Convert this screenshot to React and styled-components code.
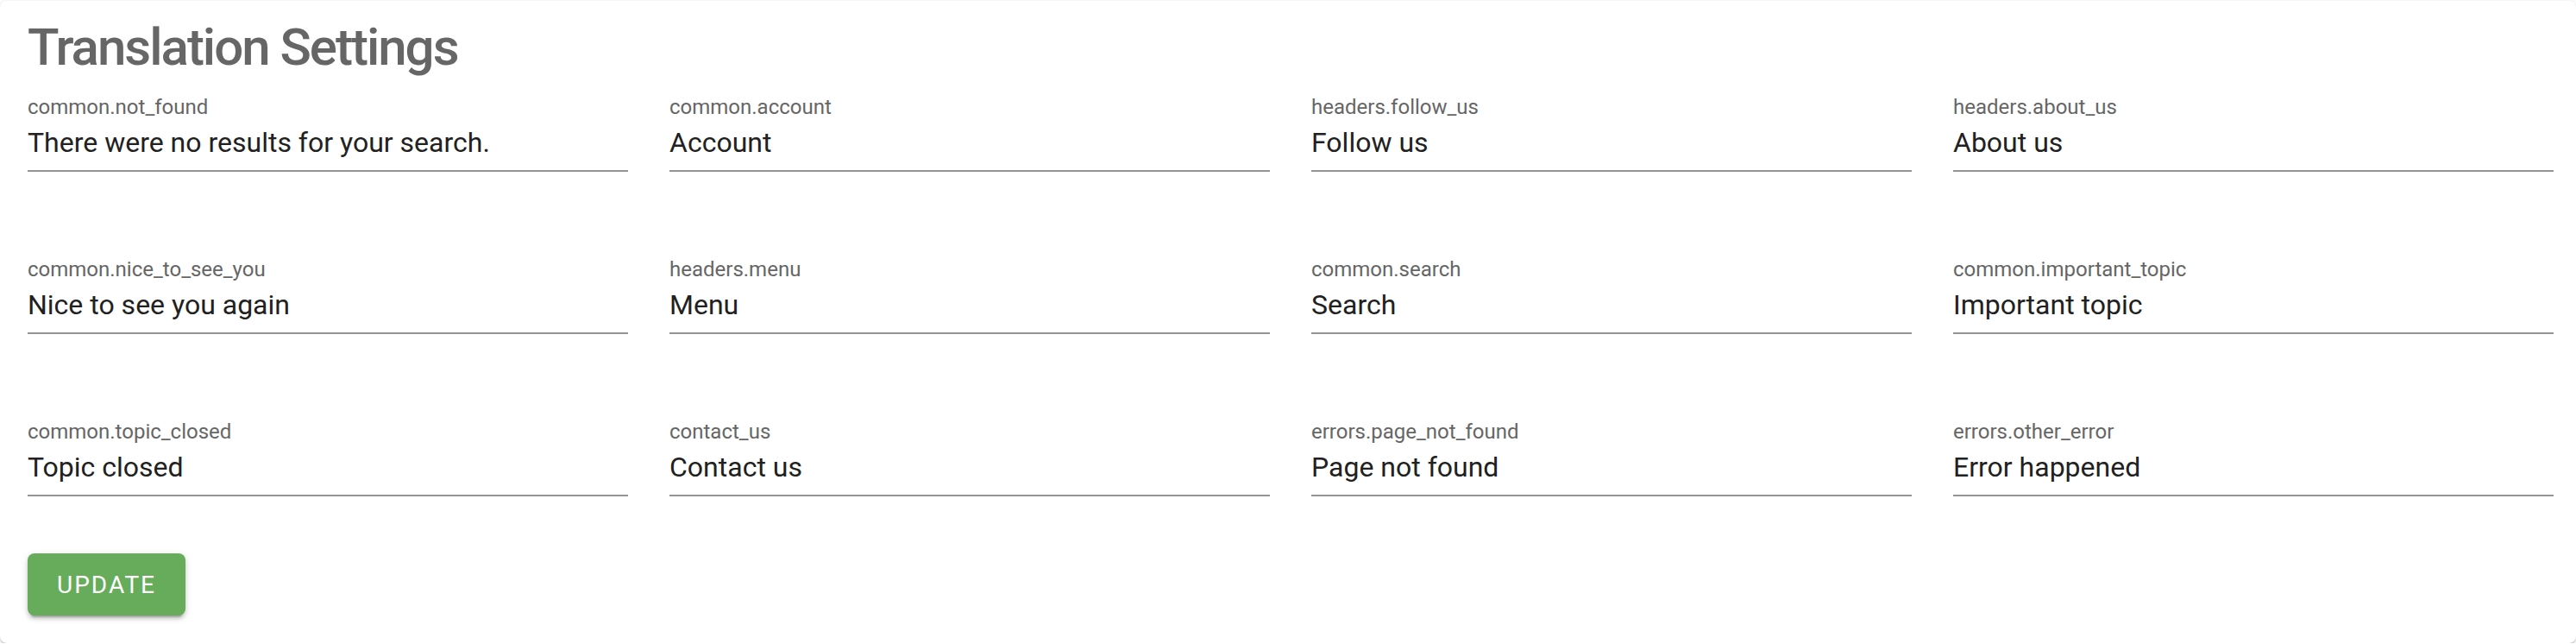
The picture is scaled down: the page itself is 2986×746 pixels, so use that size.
import React from "react";
import styled, { createGlobalStyle } from "styled-components";

const GlobalStyle = createGlobalStyle`
  html, body {
    margin: 0;
    padding: 0;
    background: #ffffff;
  }
  body {
    font-family: Roboto, "Liberation Sans", Arial, sans-serif;
  }
  * { box-sizing: border-box; }
`;

const Page = styled.div`
  padding-top: 1px;
`;

const Card = styled.section`
  background: #ffffff;
  border-radius: 8px;
  box-shadow: 0 2px 2px -2px rgba(0, 0, 0, 0.2), 0 2px 2px 0 rgba(0, 0, 0, 0.14),
    0 1px 6px 0 rgba(0, 0, 0, 0.12);
  padding: 17px 26px 32px 32px;
  height: 744px;
`;

const Title = styled.h1`
  margin: 0;
  font-family: Roboto, "Liberation Sans", Arial, sans-serif;
  font-weight: 500;
  font-size: 60px;
  line-height: 74px;
  letter-spacing: -2px;
  color: #666666;
`;

const FieldGrid = styled.div`
  margin-top: 20px;
  display: grid;
  grid-template-columns: repeat(4, 1fr);
  column-gap: 48px;
  row-gap: 101px;
`;

const Field = styled.label`
  display: flex;
  flex-direction: column;
`;

const FieldLabel = styled.span`
  font-size: 24px;
  line-height: 24px;
  color: #666666;
`;

const FieldValue = styled.span`
  padding: 6px 0 9px;
  font-size: 32px;
  line-height: 46px;
  color: #212121;
  border-bottom: 2px solid #949494;
  white-space: nowrap;
  overflow: hidden;
`;

const Actions = styled.div`
  margin-top: 66px;
  display: flex;
`;

const UpdateButton = styled.button`
  height: 72px;
  padding: 0 34px;
  border: none;
  border-radius: 8px;
  background: #67ac5b;
  color: #ffffff;
  font-family: Roboto, "Liberation Sans", Arial, sans-serif;
  font-size: 28px;
  font-weight: 400;
  letter-spacing: 2px;
  text-transform: uppercase;
  box-shadow: 0 6px 2px -4px rgba(0, 0, 0, 0.2), 0 4px 4px 0 rgba(0, 0, 0, 0.14),
    0 2px 10px 0 rgba(0, 0, 0, 0.12);
  cursor: pointer;
`;

const fields = [
  ["common.not_found", "There were no results for your search."],
  ["common.account", "Account"],
  ["headers.follow_us", "Follow us"],
  ["headers.about_us", "About us"],
  ["common.nice_to_see_you", "Nice to see you again"],
  ["headers.menu", "Menu"],
  ["common.search", "Search"],
  ["common.important_topic", "Important topic"],
  ["common.topic_closed", "Topic closed"],
  ["contact_us", "Contact us"],
  ["errors.page_not_found", "Page not found"],
  ["errors.other_error", "Error happened"],
];

export default function App() {
  return (
    <>
      <GlobalStyle />
      <Page>
        <Card>
          <Title>Translation Settings</Title>
          <FieldGrid>
            {fields.map(([key, value]) => (
              <Field key={key}>
                <FieldLabel>{key}</FieldLabel>
                <FieldValue>{value}</FieldValue>
              </Field>
            ))}
          </FieldGrid>
          <Actions>
            <UpdateButton type="button">Update</UpdateButton>
          </Actions>
        </Card>
      </Page>
    </>
  );
}
